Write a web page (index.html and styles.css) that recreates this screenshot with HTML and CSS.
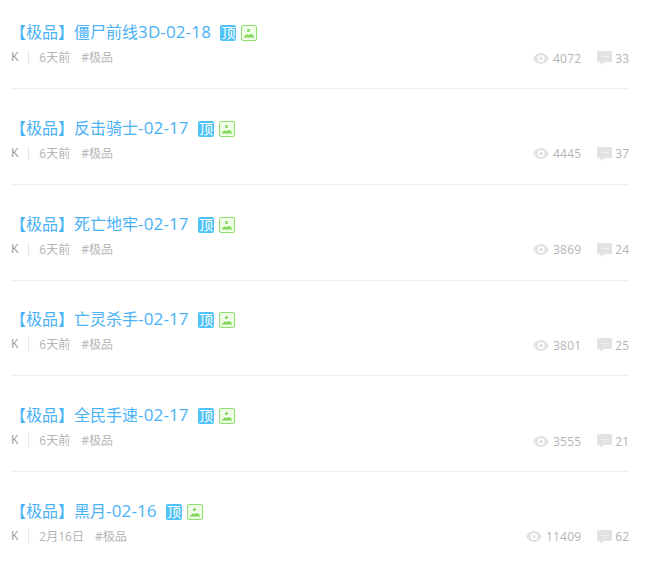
FILE: index.html
```html
<!DOCTYPE html>
<html lang="zh-CN">

<head>
   <meta charset="UTF-8">
   <title>极品</title>
   <link rel="stylesheet" href="styles.css">
</head>

<body>
   <svg class="sprites" width="0" height="0">
      <symbol id="icon-pic" viewBox="0 0 16 16">
         <rect x=".5" y=".5" width="15" height="15" rx="1.5" fill="#f1fce8" stroke="#8ee06c" />
         <circle cx="7.500" cy="5.500" r="1.500" fill="#7ed957" />
         <path d="M2.500 12.500c1.200-1.500 2.400-3 3.500-3 .8 0 1.300.6 2 .6s1.200-1.100 2.200-1.100c1.100 0 2.300 2 3.300 3.500z" fill="#7ed957" />
      </symbol>
      <symbol id="icon-eye" viewBox="0 0 16 11">
         <path fill-rule="evenodd" d="M8 0c3.500 0 6.300 2.300 8 5.500-1.700 3.200-4.500 5.500-8 5.500S1.700 8.700 0 5.500C1.700 2.300 4.500 0 8 0zm0 2a3.500 3.500 0 1 0 0 7 3.500 3.500 0 0 0 0-7zm0 1.700a1.800 1.800 0 1 1 0 3.600 1.800 1.800 0 0 1 0-3.600z" fill="#e2e2e2" />
      </symbol>
      <symbol id="icon-comment" viewBox="0 0 15 14">
         <path fill-rule="evenodd" d="M1.500 0h12A1.500 1.500 0 0 1 15 1.500v8a1.500 1.500 0 0 1-1.500 1.500H7l-3.500 3v-3h-2A1.500 1.500 0 0 1 0 9.500v-8A1.500 1.500 0 0 1 1.500 0zM4 5v1.300h1.300V5zm3 0v1.300h1.300V5zm3 0v1.300h1.300V5z" fill="#e2e2e2" />
      </symbol>
   </svg>

   <ul class="post-list">
      <li class="post">
         <h2 class="post-title"><a>【极品】僵尸前线<span class="latin">3D-02-18</span></a>
            <span class="badge-top">顶</span>
            <svg class="badge"><use href="#icon-pic" /></svg>
         </h2>
         <div class="post-meta">
            <span class="author">K</span><span class="time">6天前</span><span class="tag">#极品</span>
            <span class="stats">
               <svg class="eye"><use href="#icon-eye" /></svg><span class="views">4072</span>
               <svg class="comment"><use href="#icon-comment" /></svg><span>33</span>
            </span>
         </div>
      </li>
      <li class="post">
         <h2 class="post-title"><a>【极品】反击骑士<span class="latin">-02-17</span></a>
            <span class="badge-top">顶</span>
            <svg class="badge"><use href="#icon-pic" /></svg>
         </h2>
         <div class="post-meta">
            <span class="author">K</span><span class="time">6天前</span><span class="tag">#极品</span>
            <span class="stats">
               <svg class="eye"><use href="#icon-eye" /></svg><span class="views">4445</span>
               <svg class="comment"><use href="#icon-comment" /></svg><span>37</span>
            </span>
         </div>
      </li>
      <li class="post">
         <h2 class="post-title"><a>【极品】死亡地牢<span class="latin">-02-17</span></a>
            <span class="badge-top">顶</span>
            <svg class="badge"><use href="#icon-pic" /></svg>
         </h2>
         <div class="post-meta">
            <span class="author">K</span><span class="time">6天前</span><span class="tag">#极品</span>
            <span class="stats">
               <svg class="eye"><use href="#icon-eye" /></svg><span class="views">3869</span>
               <svg class="comment"><use href="#icon-comment" /></svg><span>24</span>
            </span>
         </div>
      </li>
      <li class="post">
         <h2 class="post-title"><a>【极品】亡灵杀手<span class="latin">-02-17</span></a>
            <span class="badge-top">顶</span>
            <svg class="badge"><use href="#icon-pic" /></svg>
         </h2>
         <div class="post-meta">
            <span class="author">K</span><span class="time">6天前</span><span class="tag">#极品</span>
            <span class="stats">
               <svg class="eye"><use href="#icon-eye" /></svg><span class="views">3801</span>
               <svg class="comment"><use href="#icon-comment" /></svg><span>25</span>
            </span>
         </div>
      </li>
      <li class="post">
         <h2 class="post-title"><a>【极品】全民手速<span class="latin">-02-17</span></a>
            <span class="badge-top">顶</span>
            <svg class="badge"><use href="#icon-pic" /></svg>
         </h2>
         <div class="post-meta">
            <span class="author">K</span><span class="time">6天前</span><span class="tag">#极品</span>
            <span class="stats">
               <svg class="eye"><use href="#icon-eye" /></svg><span class="views">3555</span>
               <svg class="comment"><use href="#icon-comment" /></svg><span>21</span>
            </span>
         </div>
      </li>
      <li class="post">
         <h2 class="post-title"><a>【极品】黑月<span class="latin">-02-16</span></a>
            <span class="badge-top">顶</span>
            <svg class="badge"><use href="#icon-pic" /></svg>
         </h2>
         <div class="post-meta">
            <span class="author">K</span><span class="time">2月16日</span><span class="tag">#极品</span>
            <span class="stats">
               <svg class="eye"><use href="#icon-eye" /></svg><span class="views">11409</span>
               <svg class="comment"><use href="#icon-comment" /></svg><span>62</span>
            </span>
         </div>
      </li>
   </ul>
</body>

</html>
```

FILE: styles.css
```css
html,
body {
   height: 563px;
   overflow: hidden;
}

body {
   margin: 0;
   padding: 22px 23px 0 11px;
   box-sizing: border-box;
   background-color: #fff;
   font-family: "Open Sans", "Noto Sans CJK SC", sans-serif;
}

.sprites {
   display: block;
   height: 0;
}

.post-list {
   list-style: none;
   margin: 0;
   padding: 0;
}

.post {
   padding-bottom: 21px;
   margin-bottom: 28.75px;
   border-bottom: 1px solid #eee;
}

.post:last-child {
   padding-bottom: 0;
   margin-bottom: 0;
   border-bottom: 0;
}

.post-title {
   display: flex;
   align-items: center;
   gap: 5px;
   height: 20px;
   margin: 0;
   font-size: 16px;
   font-weight: normal;
   color: #4ab2f6;
}

.post-title a {
   margin: -2px 4.3px 0 -1px;
}

/* latin part of the title sits a bit larger than the chinese */
.latin {
   font-size: 17px;
   letter-spacing: .15px;
}

.badge {
   width: 16px;
   height: 16px;
   flex: none;
   margin-top: 2px;
}

.badge-top {
   width: 16px;
   height: 16px;
   flex: none;
   margin-top: 2px;
   border-radius: 2px;
   background-color: #4fc3f7;
   color: #fff;
   font-size: 14px;
   line-height: 16px;
   text-align: center;
}

.post-meta {
   display: flex;
   align-items: center;
   height: 20px;
   margin-top: 5px;
   font-size: 12px;
   color: #b5b5b5;
}

.author {
   color: #999;
   padding-right: 10px;
   border-right: 1px solid #e5e5e5;
   line-height: 14px;
}

.time {
   margin-left: 10px;
}

.tag {
   margin-left: 11px;
}

.stats {
   display: flex;
   align-items: center;
   margin-left: auto;
   padding-top: 2px;
}

.eye {
   width: 16px;
   height: 11px;
   margin-right: 4px;
}

.views {
   margin-right: 16px;
   letter-spacing: .2px;
}

.comment {
   width: 15px;
   height: 14px;
   margin-right: 3px;
}
```
